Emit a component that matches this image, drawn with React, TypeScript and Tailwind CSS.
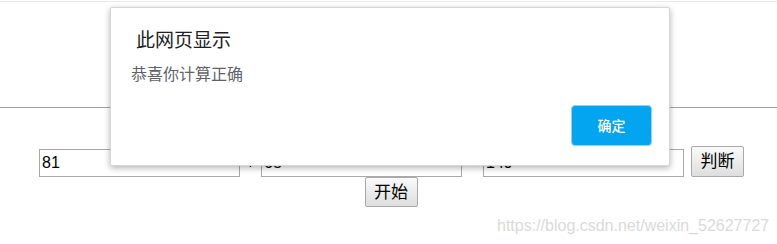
export default function App() {
  return (
    <div className="relative w-[777px] h-[244px] overflow-hidden bg-white font-['Liberation_Sans','Noto_Sans_CJK_SC',sans-serif] text-black">
      <div className="h-[2px] border-b border-[#e8e8e8]" />
      <div className="h-[105px]" />
      <hr className="border-0 border-t border-[#a0a0a0]" />
      <div className="pt-[38px] pl-[6px] flex flex-col items-center">
        <div className="flex items-end">
          <input
            readOnly
            value="81"
            className="w-[201px] h-[28px] border border-[#a9a9a9] px-[2px] text-[16px] outline-none"
          />
          <span className="w-[21px] text-center text-[16px] leading-[28px]">+</span>
          <input
            readOnly
            value="68"
            className="w-[201px] h-[28px] border border-[#a9a9a9] px-[2px] text-[16px] outline-none"
          />
          <span className="w-[21px] text-center text-[16px] leading-[28px]">=</span>
          <input
            readOnly
            value="149"
            className="w-[201px] h-[28px] border border-[#a9a9a9] px-[2px] text-[16px] outline-none"
          />
          <button className="ml-[7px] w-[53px] h-[31px] border border-[#a9a9a9] rounded-[2px] bg-gradient-to-b from-[#fafafa] to-[#dedede] text-[17px] leading-none">
            判断
          </button>
        </div>
        <button className="-ml-[1px] w-[53px] h-[30px] border border-[#a9a9a9] rounded-[2px] bg-gradient-to-b from-[#fafafa] to-[#dedede] text-[17px] leading-none">
          开始
        </button>
      </div>

      <div className="absolute left-[497px] top-[214px] text-[16px] text-[#dadada] font-['Liberation_Sans',sans-serif] whitespace-nowrap">
        https://blog.csdn.net/weixin_52627727
      </div>

      <div className="absolute left-[110px] top-[7px] w-[560px] h-[159px] bg-white rounded-[2px] border border-[#d6d6d6] shadow-[0_2px_6px_rgba(0,0,0,0.3)] font-['Noto_Sans_CJK_SC',sans-serif] flex flex-col">
        <div className="pl-[25px] pt-[18px] text-[19px] leading-[26px] text-[#202124]">此网页显示</div>
        <div className="pl-[20px] pt-[10px] text-[16px] leading-[22px] text-[#5f6368]">恭喜你计算正确</div>
        <div className="flex justify-end pr-[17px] mt-auto pb-[19px]">
          <button className="w-[81px] h-[41px] rounded-[4px] bg-[#03a4f0] border border-[#8fd3f7] text-white text-[14px] font-medium">
            确定
          </button>
        </div>
      </div>
    </div>
  );
}
